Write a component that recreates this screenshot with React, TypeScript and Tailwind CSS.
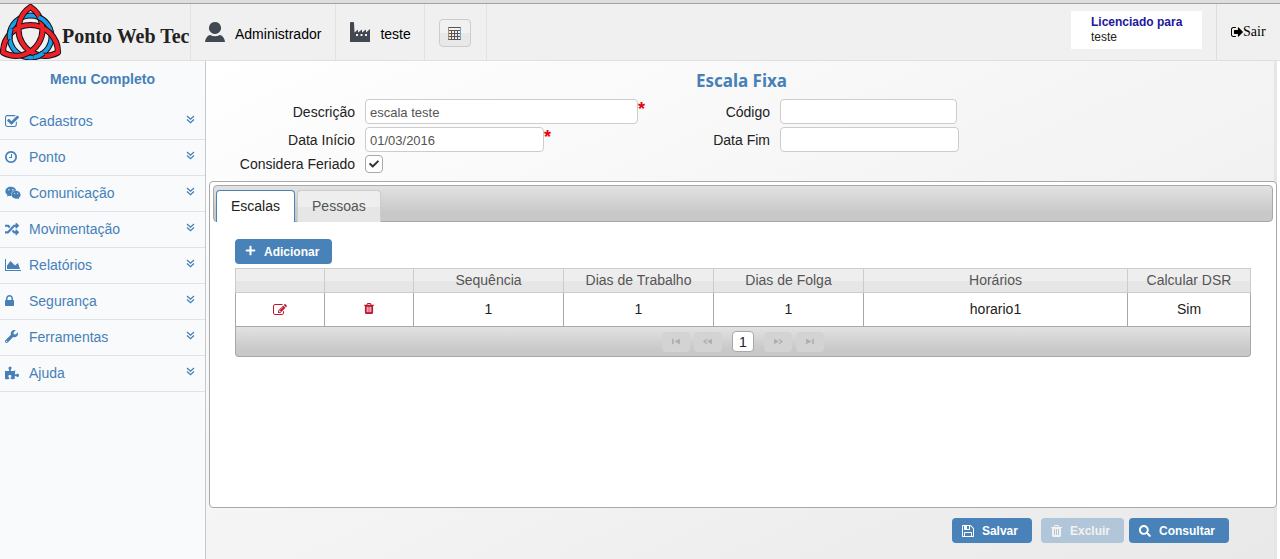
import React, { useState } from "react";
import { FaWeixin, FaRandom, FaWrench, FaPuzzlePiece, FaPlus, FaCheck, FaSearch } from "react-icons/fa";

type IconProps = { className?: string };

const glyph = (viewBox: string, d: string) =>
  function Glyph({ className }: IconProps) {
    return (
      <svg viewBox={viewBox} className={className} fill="currentColor" aria-hidden="true">
        <path d={d} />
      </svg>
    );
  };

const CheckSquare = glyph(
  "0 0 1664 1536",
  "M1408 930v318q0 119-84.5 203.5T1120 1536H288q-119 0-203.5-84.5T0 1248V416q0-119 84.5-203.5T288 128h832q63 0 117 25 15 7 18 23 3 17-9 29l-49 49q-10 10-23 10-3 0-9-2-23-6-45-6H288q-66 0-113 47t-47 113v832q0 66 47 113t113 47h832q66 0 113-47t47-113V994q0-13 9-22l64-64q10-10 23-10 6 0 12 3 20 8 20 29zm231-489l-814 814q-24 24-57 24t-57-24L281 825q-24-24-24-57t24-57l110-110q24-24 57-24t57 24l263 263 647-647q24-24 57-24t57 24l110 110q24 24 24 57t-24 57z"
);
const Clock = glyph(
  "0 0 1536 1536",
  "M896 416v448q0 14-9 23t-23 9H544q-14 0-23-9t-9-23v-64q0-14 9-23t23-9h224V416q0-14 9-23t23-9h64q14 0 23 9t9 23zm416 352q0-148-73-273t-198-198-273-73-273 73-198 198-73 273 73 273 198 198 273 73 273-73 198-198 73-273zm224 0q0 209-103 385.5T1153.5 1433 768 1536t-385.5-103T103 1153.5 0 768t103-385.5T382.5 103 768 0t385.5 103T1433 382.5 1536 768z"
);
const AreaChart = glyph("0 0 2048 1536", "M2048 1408v128H0V0h128v1408h1920zM1664 512l256 768H256V832l448-576 576 576z");
const Lock = glyph(
  "0 0 1152 1408",
  "M320 640h512V448q0-106-75-181t-181-75-181 75-75 181v192zm832 96v576q0 40-28 68t-68 28H96q-40 0-68-28t-28-68V736q0-40 28-68t68-28h32V448q0-184 132-316T576 0t316 132 132 316v192h32q40 0 68 28t28 68z"
);
const Edit = glyph(
  "0 0 1792 1536",
  "M888 1184l116-116-152-152-116 116v56h96v96h56zm440-720q-16-16-33 1L945 815q-17 17-1 33t33-1l350-350q17-17 1-33zm80 594v190q0 119-84.5 203.5T1120 1536H288q-119 0-203.5-84.5T0 1248V416q0-119 84.5-203.5T288 128h832q63 0 117 25 15 7 18 23 3 17-9 29l-49 49q-14 14-32 8-23-6-45-6H288q-66 0-113 47t-47 113v832q0 66 47 113t113 47h832q66 0 113-47t47-113v-126q0-13 9-22l64-64q15-15 35-7t20 29zm-96-738l288 288-672 672H640V992zm444 132l-92 92-288-288 92-92q28-28 68-28t68 28l152 152q28 28 28 68t-28 68z"
);
const Trash = glyph(
  "0 0 1408 1536",
  "M512 1248V544q0-14-9-23t-23-9h-64q-14 0-23 9t-9 23v704q0 14 9 23t23 9h64q14 0 23-9t9-23zm256 0V544q0-14-9-23t-23-9h-64q-14 0-23 9t-9 23v704q0 14 9 23t23 9h64q14 0 23-9t9-23zm256 0V544q0-14-9-23t-23-9h-64q-14 0-23 9t-9 23v704q0 14 9 23t23 9h64q14 0 23-9t9-23zM480 256h448l-48-117q-7-9-17-11H546q-10 2-17 11zm928 32v64q0 14-9 23t-23 9h-96v948q0 83-47 143.5t-113 60.5H288q-66 0-113-58.5T128 1336V384H32q-14 0-23-9t-9-23v-64q0-14 9-23t23-9h309l70-167q15-37 54-63t79-26h320q40 0 79 26t54 63l70 167h309q14 0 23 9t9 23z"
);
const Floppy = glyph(
  "0 0 1536 1536",
  "M384 1408h768v-384H384v384zm896 0h128V512q0-14-10-38.5t-20-34.5l-281-281q-10-10-34-20t-39-10v416q0 40-28 68t-68 28H352q-40 0-68-28t-28-68V128H128v1280h128V992q0-40 28-68t68-28h832q40 0 68 28t28 68v416zM896 480V160q0-13-9.5-22.5T864 128H672q-13 0-22.5 9.5T640 160v320q0 13 9.500 22.500T672 512h192q13 0 22.500-9.500T896 480zm640 32v928q0 40-28 68t-68 28H96q-40 0-68-28t-28-68V96q0-40 28-68T96 0h928q40 0 88 20t76 48l280 280q28 28 48 76t20 88z"
);
const SignOut = glyph(
  "0 256 1568 1280",
  "M640 1440q0 4 1 20t.5 26.5-3 23.5-10 19.5-20.5 6.5H288q-119 0-203.5-84.5T0 1248V544q0-119 84.5-203.5T288 256h320q13 0 22.5 9.5T640 288q0 4 1 20t.5 26.5-3 23.5-10 19.5T608 384H288q-66 0-113 47t-47 113v704q0 66 47 113t113 47h312l11.5 1 11.5 3 8 5.5 7 9 2 13.5zm928-544q0 26-19 45l-544 544q-19 19-45 19t-45-19-19-45v-288H448q-26 0-45-19t-19-45V704q0-26 19-45t45-19h448V352q0-26 19-45t45-19 45 19l544 544q19 19 19 45z"
);
const UserShape = glyph(
  "0 0 20 20",
  "M10 0a6 6 0 0 1 3.600 10.800Q10 13.200 6.400 10.800A6 6 0 0 1 10 0zM0 20q.5-4.500 3.500-6.500l1.700-.6q4.800 2.600 9.600 0l1.700.6Q19.500 15.500 20 20z"
);
const Factory = glyph(
  "0 0 20 20",
  "M0 20V1q0-1 1-1h2q1 0 1 1l.5 9.500 3.500-3v3l4-3v3l4-3v3l4-3.500v13zM6 12v2h2v-2zm4.500 0v2h2v-2zm4.500 0v2h2v-2z"
);
const DoubleDown = ({ className }: IconProps) => (
  <svg viewBox="0 0 9 9" className={className} fill="none" stroke="currentColor" strokeWidth="1.3" aria-hidden="true">
    <path d="M1 1l3.500 3.200L8 1M1 4.500l3.500 3.200L8 4.500" />
  </svg>
);
const Calculator = ({ className }: IconProps) => (
  <svg viewBox="0 0 13 13" className={className} fill="none" stroke="#555" aria-hidden="true">
    <path d="M.5.5h12v12H.5zM.5 3.500h12M.5 6.500h12M.5 9.500h12M3.500 3.500v9M6.500 3.500v9M9.500 3.500v9" />
    <path d="M.5 1v11" stroke="#b98a55" />
    <path d="M12.500 1v11" stroke="#6fa8cf" />
  </svg>
);

function Logo() {
  const knot = "M30.500 7A26.600 26.600 0 0 0 58 52.500A26.600 26.600 0 0 0 3 52.500A26.600 26.600 0 0 0 30.500 7z";
  const over = "M38.500 17.100A21 21 0 0 1 47 23.500";
  return (
    <svg viewBox="0 0 62 56" className="h-14 w-[62px] shrink-0" fill="none" aria-hidden="true">
      <g transform="translate(0 -4)">
        <circle cx="30.500" cy="36.500" r="21" stroke="#161014" strokeWidth="5.800" />
        <circle cx="30.500" cy="36.500" r="21" stroke="#1aa0e8" strokeWidth="3.800" />
        <path d={knot} stroke="#161014" strokeWidth="6.200" strokeLinejoin="round" />
        <path d={knot} stroke="#ee2028" strokeWidth="4.200" />
        {[0, 120, 240].map((angle) => (
          <g key={angle} transform={`rotate(${angle} 30.5 36.5)`}>
            <path d={over} stroke="#161014" strokeWidth="5.800" />
            <path d={over} stroke="#1aa0e8" strokeWidth="3.800" />
          </g>
        ))}
      </g>
    </svg>
  );
}

const menu: { label: string; Icon: React.ComponentType<IconProps>; size: string }[] = [
  { label: "Cadastros", Icon: CheckSquare, size: "w-3.5 h-[13px]" },
  { label: "Ponto", Icon: Clock, size: "size-3" },
  { label: "Comunicação", Icon: FaWeixin, size: "size-4" },
  { label: "Movimentação", Icon: FaRandom, size: "size-3.5" },
  { label: "Relatórios", Icon: AreaChart, size: "w-4 h-3" },
  { label: "Segurança", Icon: Lock, size: "w-[9px] h-[11px]" },
  { label: "Ferramentas", Icon: FaWrench, size: "size-[13px]" },
  { label: "Ajuda", Icon: FaPuzzlePiece, size: "size-3.5" },
];

const inputClass =
  "h-[25px] rounded border border-[#ccc] bg-white px-1 pt-px text-[13px] text-[#555] outline-none";
const blueButton =
  "flex h-[25px] items-center rounded bg-[#4882b9] px-2.5 text-xs font-bold text-white disabled:opacity-35";

function Sidebar() {
  return (
    <nav className="w-[206px] shrink-0 border-r border-[#c5c8cc] bg-[#f8fafc] text-[#4680b8]">
      <h2 className="flex h-[43px] items-start justify-center pt-2 text-sm font-bold">Menu Completo</h2>
      <ul>
        {menu.map(({ label, Icon, size }) => (
          <li key={label} className="border-b border-[#dfe2e6]">
            <a href="#" className="flex h-[35px] items-center pb-0.5 pl-[5px] pr-2.5 text-sm">
              <span className="w-6">
                <Icon className={size} />
              </span>
              <span className="flex-1">{label}</span>
              <DoubleDown className="mb-0.5 size-[9px]" />
            </a>
          </li>
        ))}
      </ul>
    </nav>
  );
}

function Header() {
  return (
    <>
      <div className="h-1 border-b border-[#a3a3a3] bg-[#dedede]" />
      <header className="flex h-[57px] border-b border-[#dfdfdf] bg-[#f0f0f0] text-sm text-black">
        <div className="flex w-[191px] items-center border-r border-[#e2e2e2]">
          <Logo />
          <span className="whitespace-nowrap pt-2 font-['Liberation_Serif',serif] text-xl font-bold leading-6 text-[#222]">
            Ponto Web Tec
          </span>
        </div>
        <div className="flex items-center gap-2.5 border-r border-[#e2e2e2] px-3.5">
          <UserShape className="size-5 text-[#414851]" />
          <span className="pt-1">Administrador</span>
        </div>
        <div className="flex items-center gap-2.5 border-r border-[#e2e2e2] pl-3.5 pr-[13px]">
          <Factory className="size-5 text-[#414851]" />
          <span className="pt-1">teste</span>
        </div>
        <div className="flex items-center border-r border-[#e2e2e2] pl-3.5 pr-[15px] pt-0.5">
          <button
            aria-label="Calculadora"
            className="grid h-7 w-8 place-items-center rounded border border-[#ccc] bg-linear-to-b from-[#f1f1f1] from-50% to-[#e8e8e8] to-50%"
          >
            <Calculator className="size-[13px]" />
          </button>
        </div>
        <div className="ml-auto flex">
          <div className="mr-3.5 mt-[7px] h-[38px] w-[131px] bg-white pl-5 pt-1 text-xs leading-[15px] text-[#222]">
            <strong className="block text-[#22189b]">Licenciado para</strong>
            teste
          </div>
          <a
            href="#"
            className="flex w-16 items-center border-l border-[#dedede] pl-3.5 font-['Liberation_Serif',serif] text-sm"
          >
            <SignOut className="h-2.5 w-3" />
            Sair
          </a>
        </div>
      </header>
    </>
  );
}

function Form() {
  const [descricao, setDescricao] = useState("escala teste");
  const [inicio, setInicio] = useState("01/03/2016");
  const [codigo, setCodigo] = useState("");
  const [fim, setFim] = useState("");
  const [feriado, setFeriado] = useState(true);
  const label = "text-right leading-[18px]";
  return (
    <form className="px-0.5 pb-2 pt-2.5 text-sm text-[#222]">
      <h1 className="mb-2 text-center font-['Noto_Sans',sans-serif] text-[17px] font-bold leading-5 text-[#4680b8]">
        Escala Fixa
      </h1>
      <div className="grid grid-cols-[144px_289px_106px_1fr] items-center gap-x-2.5 gap-y-[3px]">
        <label htmlFor="descricao" className={label}>Descrição</label>
        <div className="flex items-start">
          <input id="descricao" className={`w-[273px] ${inputClass}`} value={descricao} onChange={(e) => setDescricao(e.target.value)} />
          <span className="text-lg font-bold leading-5 text-red-600">*</span>
        </div>
        <label htmlFor="codigo" className={label}>Código</label>
        <input id="codigo" className={`w-[177px] ${inputClass}`} value={codigo} onChange={(e) => setCodigo(e.target.value)} />
        <label htmlFor="inicio" className={label}>Data Início</label>
        <div className="flex items-start">
          <input id="inicio" className={`w-[179px] ${inputClass}`} value={inicio} onChange={(e) => setInicio(e.target.value)} />
          <span className="text-lg font-bold leading-5 text-red-600">*</span>
        </div>
        <label htmlFor="fim" className={label}>Data Fim</label>
        <input id="fim" className={`w-[179px] ${inputClass}`} value={fim} onChange={(e) => setFim(e.target.value)} />
        <label htmlFor="feriado" className={label}>Considera Feriado</label>
        <div className="grid size-[18px] place-items-center">
          <input
            id="feriado"
            type="checkbox"
            checked={feriado}
            onChange={(e) => setFeriado(e.target.checked)}
            className="col-start-1 row-start-1 size-[18px] appearance-none rounded-sm border border-[#a8a8a8] bg-white"
          />
          {feriado && <FaCheck className="pointer-events-none col-start-1 row-start-1 size-2.5 text-[#333]" />}
        </div>
      </div>
    </form>
  );
}

const columns = [
  { title: "", width: "w-[89px]" },
  { title: "", width: "w-[89px]" },
  { title: "Sequência", width: "w-[150px]" },
  { title: "Dias de Trabalho", width: "w-[150px]" },
  { title: "Dias de Folga", width: "w-[150px]" },
  { title: "Horários", width: "" },
  { title: "Calcular DSR", width: "w-[123px]" },
];

const pagerPaths: Record<string, string> = {
  "Primeira página": "M1 1h2v7H1zM11 1v7L4 4.500z",
  "Página anterior": "M5 1v1.500L2 4.500l3 2V8L0 5V4zM11 1v7L5 4.500z",
  "Próxima página": "M1 1v7l6-3.500zM7 1v1.500l3 2-3 2V8l5-3V4z",
  "Última página": "M1 1v7l7-3.500zM9 1h2v7H9z",
};

function PagerButton({ label }: { label: string }) {
  return (
    <button disabled aria-label={label} className="grid h-5 w-7 place-items-center rounded bg-[#d3d3d3]">
      <svg viewBox="0 0 12 9" className="h-[7px] w-2.5" fill="#adadad" aria-hidden="true">
        <path d={pagerPaths[label]} />
      </svg>
    </button>
  );
}

function Schedules() {
  const cell = "h-[34px] border border-[#a8a8a8] p-0 pb-0.5 text-center";
  return (
    <div className="px-[22px] pt-[17px]">
      <button className={blueButton}>
        <FaPlus className="mb-0.5 mr-2 size-[11px]" />
        <span className="pr-[3px]">Adicionar</span>
      </button>
      <table className="mt-1 w-full table-fixed border-collapse text-sm text-[#222]">
        <thead>
          <tr className="bg-linear-to-b from-[#eee] from-50% to-[#e6e6e6] to-50%">
            {columns.map(({ title, width }, i) => (
              <th key={i} className={`h-6 border border-[#ccc] p-0 pb-0.5 font-normal text-[#555] ${width}`}>
                {title}
              </th>
            ))}
          </tr>
        </thead>
        <tbody className="bg-white">
          <tr>
            <td className={cell}>
              <button aria-label="Editar" className="mx-auto block text-[#c0152f]">
                <Edit className="h-3 w-3.5" />
              </button>
            </td>
            <td className={cell}>
              <button aria-label="Excluir linha" className="mx-auto block text-[#c0152f]">
                <Trash className="h-[11px] w-2.5" />
              </button>
            </td>
            <td className={cell}>1</td>
            <td className={cell}>1</td>
            <td className={cell}>1</td>
            <td className={cell}>horario1</td>
            <td className={cell}>Sim</td>
          </tr>
        </tbody>
      </table>
      <div className="flex h-[30px] items-center justify-center gap-1 rounded-b border border-t-0 border-[#a8a8a8] bg-linear-to-b from-[#e2e2e2] to-[#c8c8c8] to-80%">
        <PagerButton label="Primeira página" />
        <PagerButton label="Página anterior" />
        <button className="mx-1.5 h-[21px] w-[22px] rounded border border-[#a8a8a8] bg-white text-sm leading-[18px] text-[#222]">
          1
        </button>
        <PagerButton label="Próxima página" />
        <PagerButton label="Última página" />
      </div>
    </div>
  );
}

function Tabs() {
  const [tab, setTab] = useState(0);
  return (
    <section className="min-h-[327px] rounded border border-[#a8a8a8] bg-white p-[3px]">
      <div
        role="tablist"
        className="flex h-[37px] items-end gap-0.5 rounded border border-[#a8a8a8] bg-linear-to-b from-[#e2e2e2] to-[#c8c8c8] to-75% px-0.5 text-sm"
      >
        {["Escalas", "Pessoas"].map((name, i) => (
          <button
            key={name}
            role="tab"
            aria-selected={tab === i}
            onClick={() => setTab(i)}
            className={
              tab === i
                ? "-mb-px h-8 rounded-t border border-b-0 border-[#4882b9] bg-white px-3.5 pb-0.5 text-[#222]"
                : "-mb-px h-8 rounded-t border border-b-0 border-[#ccc] bg-linear-to-b from-[#eee] from-50% to-[#e6e6e6] to-50% px-3.5 pb-0.5 text-[#555]"
            }
          >
            {name}
          </button>
        ))}
      </div>
      {tab === 0 && <Schedules />}
    </section>
  );
}

export default function App() {
  return (
    <div className="flex min-h-screen flex-col bg-white font-['Liberation_Sans',Arial,sans-serif]">
      <Header />
      <div className="flex flex-1">
        <Sidebar />
        <main className="mr-[3px] flex-1 border-r-[3px] border-[#e6e6e6] bg-linear-to-br from-white to-[#e9e9e9] pl-[3px]">
          <Form />
          <div className="-mr-[3px]">
            <Tabs />
          </div>
          <div className="flex justify-end pr-[45px] pt-2.5">
            <button className={`mr-[9px] ${blueButton}`}>
              <Floppy className="mr-2 size-3" />
              <span className="pr-1">Salvar</span>
            </button>
            <button disabled className={`mr-[5px] ${blueButton}`}>
              <Trash className="mr-2 h-3 w-[11px]" />
              <span className="pr-1">Excluir</span>
            </button>
            <button className={blueButton}>
              <FaSearch className="mr-2 size-3" />
              <span className="pr-1">Consultar</span>
            </button>
          </div>
        </main>
      </div>
    </div>
  );
}
